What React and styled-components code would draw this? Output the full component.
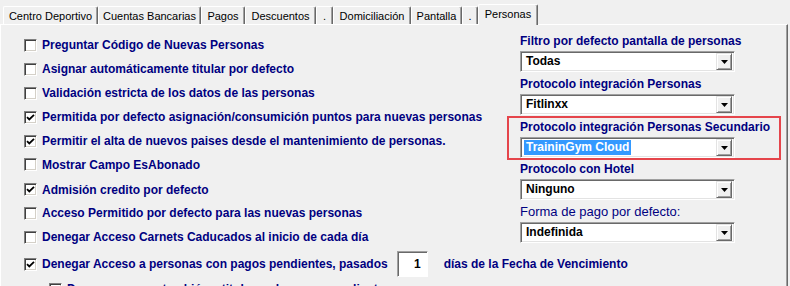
import React from 'react';
import styled, { createGlobalStyle } from 'styled-components';

const GlobalStyle = createGlobalStyle`
  html, body {
    margin: 0;
    padding: 0;
    background: #f0f0f0;
  }
  body {
    font-family: "Liberation Sans", Arial, sans-serif;
  }
`;

const Window = styled.div`
  width: 790px;
  height: 286px;
  overflow: hidden;
  background: #f0f0f0;
`;

const TabStrip = styled.div`
  display: flex;
  align-items: flex-end;
  height: 24px;
  padding-left: 3px;
  box-sizing: border-box;
`;

const Tab = styled.div`
  box-sizing: border-box;
  width: ${(p) => p.w}px;
  height: ${(p) => (p.active ? 21 : 18)}px;
  margin-bottom: ${(p) => (p.active ? -1 : 0)}px;
  position: relative;
  z-index: ${(p) => (p.active ? 2 : 1)};
  display: flex;
  align-items: center;
  justify-content: center;
  padding-bottom: ${(p) => (p.active ? 3 : 0)}px;
  font-size: 11px;
  color: #000;
  background: #f0f0f0;
  border-top: 1px solid #fff;
  border-left: 1px solid #fff;
  border-right: 1px solid #696969;
  box-shadow: inset -1px 0 #a0a0a0;
  border-radius: 2px 2px 0 0;
  white-space: nowrap;
`;

const Panel = styled.div`
  box-sizing: border-box;
  height: 262px;
  margin-right: 2px;
  border-top: 1px solid #fff;
  border-left: 1px solid #fff;
  border-right: 1px solid #696969;
  box-shadow: inset -1px 0 #a0a0a0;
  padding-top: 8px;
`;

const Columns = styled.div`
  display: grid;
  grid-template-columns: 496px 215px;
  padding-left: 23px;
`;

const LeftCol = styled.div`
  display: flex;
  flex-direction: column;
`;

const Row = styled.div`
  display: flex;
  align-items: center;
  gap: 5px;
  height: ${(p) => p.h || 24}px;
  margin-top: ${(p) => p.mt || 0}px;
  padding-left: ${(p) => p.indent || 0}px;
  white-space: nowrap;
`;

const BottomRows = styled.div`
  padding-left: 23px;
`;

const Box = styled.span`
  box-sizing: border-box;
  flex: none;
  width: 13px;
  height: 13px;
  background: #fff;
  border: 1px solid;
  border-color: #808080 #fff #fff #808080;
  box-shadow: inset 1px 1px #404040, inset -1px -1px #d4d0c8;
  display: flex;
  align-items: center;
  justify-content: center;
`;

const Label = styled.span`
  font-size: ${(p) => (p.light ? 13 : 12)}px;
  font-weight: ${(p) => (p.light ? 400 : 700)};
  color: #000080;
`;

const NumberBox = styled.div`
  box-sizing: border-box;
  width: 31px;
  height: 26px;
  margin: 0 11px 0 4px;
  background: #fff;
  border: 1px solid;
  border-color: #a0a0a0 #fff #fff #a0a0a0;
  box-shadow: inset 1px 1px #696969;
  display: flex;
  align-items: center;
  justify-content: flex-end;
  padding-right: 6px;
  font-size: 12px;
  font-weight: 700;
  color: #000;
`;

const RightCol = styled.div`
  display: flex;
  flex-direction: column;
`;

const Group = styled.div`
  display: flex;
  flex-direction: column;
  gap: 2px;
  margin-top: ${(p) => p.mt || 0}px;
`;

const Highlight = styled.div`
  display: flex;
  flex-direction: column;
  gap: 2px;
  margin: 1px -46px 0 -13px;
  padding: 1px 44px 0 11px;
  border: 2px solid #e5454b;
`;

const FieldLabel = styled.div`
  height: 16px;
  line-height: 16px;
  font-size: ${(p) => (p.light ? 13 : 12)}px;
  font-weight: ${(p) => (p.light ? 400 : 700)};
  color: #000080;
  white-space: nowrap;
`;

const Select = styled.div`
  box-sizing: border-box;
  height: 21px;
  background: #fff;
  border: 1px solid;
  border-color: #a0a0a0 #fff #fff #a0a0a0;
  box-shadow: inset 1px 1px #696969, inset -1px -1px #e3e3e3;
  display: flex;
  align-items: center;
  padding: 2px 2px 2px 3px;
`;

const SelectText = styled.span`
  flex: 1;
  display: flex;
`;

const Value = styled.span`
  font-size: 12px;
  font-weight: 700;
  line-height: 15px;
  padding: 0 2px;
  color: ${(p) => (p.selected ? '#fff' : '#000')};
  background: ${(p) => (p.selected ? '#3399ff' : 'transparent')};
`;

const DropButton = styled.span`
  box-sizing: border-box;
  width: 16px;
  height: 17px;
  background: #f0f0f0;
  border: 1px solid;
  border-color: #e3e3e3 #696969 #696969 #e3e3e3;
  box-shadow: inset 1px 1px #fff, inset -1px -1px #a0a0a0;
  display: flex;
  align-items: center;
  justify-content: center;
`;

const Arrow = () => (
  <svg width="7" height="4" viewBox="0 0 7 4">
    <path d="M0 0H7L3.5 4Z" fill="#000" />
  </svg>
);

const Check = () => (
  <svg width="9" height="9" viewBox="0 0 9 9">
    <path d="M1 4.2L3.3 6.5L8 1.8" fill="none" stroke="#000" strokeWidth="1.8" />
  </svg>
);

const CheckRow = ({ checked, text, h, mt, indent, light, children }) => (
  <Row h={h} mt={mt} indent={indent}>
    <Box>{checked && <Check />}</Box>
    <Label light={light}>{text}</Label>
    {children}
  </Row>
);

const Combo = ({ value, selected }) => (
  <Select>
    <SelectText>
      <Value selected={selected}>{value}</Value>
    </SelectText>
    <DropButton>
      <Arrow />
    </DropButton>
  </Select>
);

const tabs = [
  { label: 'Centro Deportivo', w: 95 },
  { label: 'Cuentas Bancarias', w: 103 },
  { label: 'Pagos', w: 44 },
  { label: 'Descuentos', w: 71 },
  { label: '.', w: 17 },
  { label: 'Domiciliación', w: 78 },
  { label: 'Pantalla', w: 51 },
  { label: '.', w: 16 },
  { label: 'Personas', w: 60, active: true },
];

const leftRows = [
  { text: 'Preguntar Código de Nuevas Personas' },
  { text: 'Asignar automáticamente titular por defecto' },
  { text: 'Validación estricta de los datos de las personas' },
  { text: 'Permitida por defecto asignación/consumición puntos para nuevas personas', checked: true },
  { text: 'Permitir el alta de nuevos paises desde el mantenimiento de personas.', checked: true },
  { text: 'Mostrar Campo EsAbonado', h: 23 },
  { text: 'Admisión credito por defecto', checked: true, mt: 2, h: 23 },
  { text: 'Acceso Permitido por defecto para las nuevas personas' },
  { text: 'Denegar Acceso Carnets Caducados al inicio de cada día' },
];

const App = () => (
  <Window>
    <GlobalStyle />
    <TabStrip>
      {tabs.map((t, i) => (
        <Tab key={i} w={t.w} active={t.active}>
          {t.label}
        </Tab>
      ))}
    </TabStrip>
    <Panel>
      <Columns>
        <LeftCol>
          {leftRows.map((r) => (
            <CheckRow key={r.text} text={r.text} checked={r.checked} h={r.h} mt={r.mt} />
          ))}
        </LeftCol>
        <RightCol>
          <Group>
            <FieldLabel>Filtro por defecto pantalla de personas</FieldLabel>
            <Combo value="Todas" />
          </Group>
          <Group mt={4}>
            <FieldLabel>Protocolo integración Personas</FieldLabel>
            <Combo value="Fitlinxx" />
          </Group>
          <Highlight>
            <FieldLabel>Protocolo integración Personas Secundario</FieldLabel>
            <Combo value="TraininGym Cloud" selected />
          </Highlight>
          <Group mt={1}>
            <FieldLabel>Protocolo con Hotel</FieldLabel>
            <Combo value="Ninguno" />
          </Group>
          <Group mt={4}>
            <FieldLabel light>Forma de pago por defecto:</FieldLabel>
            <Combo value="Indefinida" />
          </Group>
        </RightCol>
      </Columns>
      <BottomRows>
        <CheckRow
          h={30}
          checked
          text="Denegar Acceso a personas con pagos pendientes, pasados"
        >
          <NumberBox>1</NumberBox>
          <Label>días de la Fecha de Vencimiento</Label>
        </CheckRow>
        <CheckRow h={20} indent={25} text="Denegar acceso también a titulares de pagos pendientes" />
      </BottomRows>
    </Panel>
  </Window>
);

export default App;
